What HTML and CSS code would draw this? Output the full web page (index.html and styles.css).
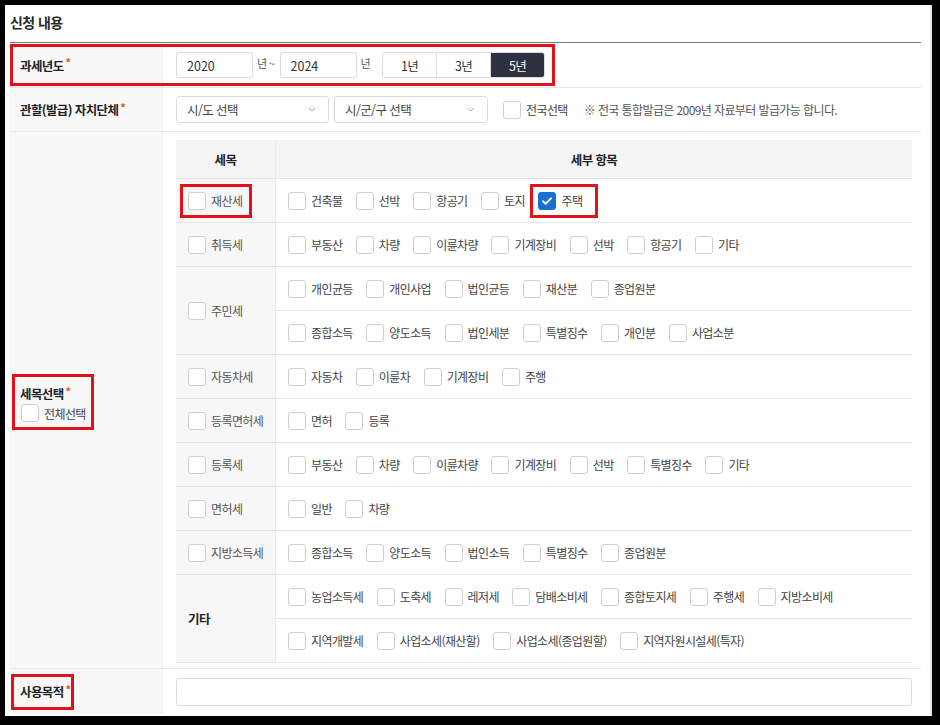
FILE: index.html
```html
<!DOCTYPE html>
<html lang="ko">
<head>
<meta charset="utf-8">
<title>신청 내용</title>
<link rel="stylesheet" href="styles.css">
</head>
<body>
<div class="page">
  <h2 class="title">신청 내용</h2>
  <div class="form">
    <div class="row r1">
      <div class="lab">과세년도<em>*</em></div>
      <div class="val">
        <span class="inp w77">2020</span>
        <span class="unit">년 ~</span>
        <span class="inp w77">2024</span>
        <span class="unit">년</span>
        <div class="seg">
          <span class="segb">1년</span>
          <span class="segb">3년</span>
          <span class="segb on">5년</span>
        </div>
      </div>
    </div>
    <div class="row r2">
      <div class="lab">관할(발급) 자치단체<em>*</em></div>
      <div class="val">
        <span class="sel s1">시/도 선택<svg class="chev" width="8" height="5" viewBox="0 0 8 5"><path d="M1 1l3 3 3-3" fill="none" stroke="#aaa" stroke-width="1"/></svg></span>
        <span class="sel s2">시/군/구 선택<svg class="chev" width="8" height="5" viewBox="0 0 8 5"><path d="M1 1l3 3 3-3" fill="none" stroke="#aaa" stroke-width="1"/></svg></span>
        <label class="ck all"><span class="cb"></span>전국선택</label>
        <span class="note">※ 전국 통합발급은 2009년 자료부터 발급가능 합니다.</span>
      </div>
    </div>
    <div class="row r3">
      <div class="lab lab3">
        <div>세목선택<em>*</em></div>
        <label class="ck"><span class="cb"></span>전체선택</label>
      </div>
      <div class="val val3">
        <div class="tbl">
          <div class="thead"><div class="th">세목</div><div class="th">세부 항목</div></div>

          <div class="trow">
            <div class="tl"><label class="ck"><span class="cb"></span>재산세</label></div>
            <div class="tr"><div class="sub">
              <label class="ck"><span class="cb"></span>건축물</label>
              <label class="ck"><span class="cb"></span>선박</label>
              <label class="ck"><span class="cb"></span>항공기</label>
              <label class="ck"><span class="cb"></span>토지</label>
              <label class="ck"><span class="cb on"><svg width="12" height="10" viewBox="0 0 12 10"><path d="M2 5.2l2.6 2.6L10 2.4" fill="none" stroke="#fff" stroke-width="2" stroke-linecap="round" stroke-linejoin="round"/></svg></span>주택</label>
            </div></div>
          </div>

          <div class="trow">
            <div class="tl"><label class="ck"><span class="cb"></span>취득세</label></div>
            <div class="tr"><div class="sub">
              <label class="ck"><span class="cb"></span>부동산</label>
              <label class="ck"><span class="cb"></span>차량</label>
              <label class="ck"><span class="cb"></span>이륜차량</label>
              <label class="ck"><span class="cb"></span>기계장비</label>
              <label class="ck"><span class="cb"></span>선박</label>
              <label class="ck"><span class="cb"></span>항공기</label>
              <label class="ck"><span class="cb"></span>기타</label>
            </div></div>
          </div>

          <div class="trow">
            <div class="tl"><label class="ck"><span class="cb"></span>주민세</label></div>
            <div class="tr">
              <div class="sub">
                <label class="ck"><span class="cb"></span>개인균등</label>
                <label class="ck"><span class="cb"></span>개인사업</label>
                <label class="ck"><span class="cb"></span>법인균등</label>
                <label class="ck"><span class="cb"></span>재산분</label>
                <label class="ck"><span class="cb"></span>종업원분</label>
              </div>
              <div class="sub">
                <label class="ck"><span class="cb"></span>종합소득</label>
                <label class="ck"><span class="cb"></span>양도소득</label>
                <label class="ck"><span class="cb"></span>법인세분</label>
                <label class="ck"><span class="cb"></span>특별징수</label>
                <label class="ck"><span class="cb"></span>개인분</label>
                <label class="ck"><span class="cb"></span>사업소분</label>
              </div>
            </div>
          </div>

          <div class="trow">
            <div class="tl"><label class="ck"><span class="cb"></span>자동차세</label></div>
            <div class="tr"><div class="sub">
              <label class="ck"><span class="cb"></span>자동차</label>
              <label class="ck"><span class="cb"></span>이륜차</label>
              <label class="ck"><span class="cb"></span>기계장비</label>
              <label class="ck"><span class="cb"></span>주행</label>
            </div></div>
          </div>

          <div class="trow">
            <div class="tl"><label class="ck"><span class="cb"></span>등록면허세</label></div>
            <div class="tr"><div class="sub">
              <label class="ck"><span class="cb"></span>면허</label>
              <label class="ck"><span class="cb"></span>등록</label>
            </div></div>
          </div>

          <div class="trow">
            <div class="tl"><label class="ck"><span class="cb"></span>등록세</label></div>
            <div class="tr"><div class="sub">
              <label class="ck"><span class="cb"></span>부동산</label>
              <label class="ck"><span class="cb"></span>차량</label>
              <label class="ck"><span class="cb"></span>이륜차량</label>
              <label class="ck"><span class="cb"></span>기계장비</label>
              <label class="ck"><span class="cb"></span>선박</label>
              <label class="ck"><span class="cb"></span>특별징수</label>
              <label class="ck"><span class="cb"></span>기타</label>
            </div></div>
          </div>

          <div class="trow">
            <div class="tl"><label class="ck"><span class="cb"></span>면허세</label></div>
            <div class="tr"><div class="sub">
              <label class="ck"><span class="cb"></span>일반</label>
              <label class="ck"><span class="cb"></span>차량</label>
            </div></div>
          </div>

          <div class="trow">
            <div class="tl"><label class="ck"><span class="cb"></span>지방소득세</label></div>
            <div class="tr"><div class="sub">
              <label class="ck"><span class="cb"></span>종합소득</label>
              <label class="ck"><span class="cb"></span>양도소득</label>
              <label class="ck"><span class="cb"></span>법인소득</label>
              <label class="ck"><span class="cb"></span>특별징수</label>
              <label class="ck"><span class="cb"></span>종업원분</label>
            </div></div>
          </div>

          <div class="trow">
            <div class="tl"><strong class="etc">기타</strong></div>
            <div class="tr">
              <div class="sub">
                <label class="ck"><span class="cb"></span>농업소득세</label>
                <label class="ck"><span class="cb"></span>도축세</label>
                <label class="ck"><span class="cb"></span>레저세</label>
                <label class="ck"><span class="cb"></span>담배소비세</label>
                <label class="ck"><span class="cb"></span>종합토지세</label>
                <label class="ck"><span class="cb"></span>주행세</label>
                <label class="ck"><span class="cb"></span>지방소비세</label>
              </div>
              <div class="sub">
                <label class="ck"><span class="cb"></span>지역개발세</label>
                <label class="ck"><span class="cb"></span>사업소세(재산할)</label>
                <label class="ck"><span class="cb"></span>사업소세(종업원할)</label>
                <label class="ck"><span class="cb"></span>지역자원시설세(특자)</label>
              </div>
            </div>
          </div>
        </div>
      </div>
    </div>
    <div class="row r4">
      <div class="lab">사용목적<em>*</em></div>
      <div class="val"><span class="inp full"></span></div>
    </div>
  </div>

  <div class="mark m1"></div>
  <div class="mark m2"></div>
  <div class="mark m3"></div>
  <div class="mark m4"></div>
  <div class="mark m5"></div>
</div>
</body>
</html>
```

FILE: styles.css
```css
html, body {
  margin: 0;
  padding: 0;
  background: #000;
}
body {
  font-family: "Noto Sans CJK KR", "Noto Sans", sans-serif;
  font-size: 12px;
  letter-spacing: -0.6px;
  color: #333;
}
.page {
  position: relative;
  margin: 5px 0 0 5px;
  width: 927px;
  height: 711px;
  background: #fff;
  border-right: 2px solid #e6e6e6;
  padding: 0 9px 0 5px;
  box-sizing: border-box;
}
.title {
  margin: 0;
  height: 38px;
  line-height: 35px;
  font-size: 14px;
  font-weight: 700;
  color: #2a2a2a;
  letter-spacing: -0.6px;
  border-bottom: 1px solid #777;
  box-sizing: border-box;
}
.row {
  display: grid;
  grid-template-columns: 153px 1fr;
  border-bottom: 1px solid #e8e8e8;
}
.r1 { height: 45px; box-sizing: border-box; }
.r2 { height: 44px; box-sizing: border-box; }
.r4 { height: 45px; border-bottom: 0; }
.lab {
  background: #f8f8f8;
  border-right: 1px solid #efefef;
  display: flex;
  align-items: center;
  padding-left: 10px;
  font-weight: 700;
  font-size: 12.5px;
  color: #222;
}
.lab em {
  font-style: normal;
  color: #e8501e;
  margin-left: 2px;
  font-size: 11px;
}
.lab > em { margin-top: -6px; }
.lab3 {
  flex-direction: column;
  align-items: flex-start;
  justify-content: center;
  padding-top: 6px;
}
.lab3 > div { display: flex; align-items: center; }
.lab3 > div em { margin-top: -6px; }
.lab3 .ck { margin-top: 1px; margin-left: 1px; font-weight: 400; color: #444; font-size: 12px; }
.val {
  display: flex;
  align-items: center;
  padding-left: 13px;
}
.inp {
  display: flex;
  align-items: center;
  height: 26px;
  border: 1px solid #dcdcdc;
  border-radius: 3px;
  box-sizing: border-box;
  padding-left: 10px;
  font-size: 12.5px;
  color: #333;
  letter-spacing: 0;
}
.w77 { width: 77px; }
.full { width: 736px; height: 28px; }
.unit {
  margin: 0 4px 0 4px;
  padding-bottom: 5px;
  color: #555;
  font-size: 11px;
}
.unit + .inp { margin-left: 1px; }
.seg {
  display: flex;
  margin-left: 8px;
  border: 1px solid #dcdcdc;
  border-radius: 3px;
  overflow: hidden;
  height: 26px;
  box-sizing: border-box;
  font-size: 12.5px;
}
.segb {
  width: 53px;
  display: flex;
  align-items: center;
  justify-content: center;
  border-right: 1px solid #e2e2e2;
  color: #333;
}
.segb:last-child { border-right: 0; }
.segb.on { background: #2e3140; color: #fff; }
.sel {
  display: flex;
  align-items: center;
  justify-content: space-between;
  height: 27px;
  border: 1px solid #dcdcdc;
  border-radius: 3px;
  box-sizing: border-box;
  padding: 0 12px 0 10px;
  color: #444;
  font-size: 12.5px;
}
.s1 { width: 153px; }
.s2 { width: 154px; margin-left: 5px; }
.all { margin-left: 15px; }
.note { margin-left: 16px; color: #555; }

.ck {
  display: inline-flex;
  align-items: center;
  white-space: nowrap;
  color: #444;
}
.cb {
  width: 18px;
  height: 18px;
  border: 1px solid #cfcfcf;
  border-radius: 3px;
  background: #fff;
  box-sizing: border-box;
  margin-right: 5px;
  display: inline-flex;
  align-items: center;
  justify-content: center;
  flex: none;
}
.cb.on { background: #1a6fd3; border-color: #1a6fd3; }

.val3 { align-items: flex-start; padding-top: 8px; }
.r3 { height: 537px; box-sizing: border-box; }
.tbl { width: 736px; }
.thead {
  display: grid;
  grid-template-columns: 100px 1fr;
  height: 39px;
  background: #f5f5f5;
  border-bottom: 1px solid #e4e4e4;
  box-sizing: border-box;
}
.th {
  display: flex;
  align-items: center;
  justify-content: center;
  font-weight: 700;
  font-size: 12.5px;
  color: #222;
}
.th:first-child { border-right: 1px solid #ebebeb; }
.trow {
  display: grid;
  grid-template-columns: 100px 1fr;
  border-bottom: 1px solid #e4e4e4;
}
.tl {
  background: #f7f7f7;
  border-right: 1px solid #ebebeb;
  display: flex;
  align-items: center;
  padding-left: 12px;
}
.tl .ck { color: #555; }
.etc { font-weight: 700; color: #222; font-size: 12.5px; }
.sub {
  height: 43px;
  display: flex;
  align-items: center;
  padding-left: 12px;
  gap: 13.5px;
}
.sub + .sub { border-top: 1px solid #e4e4e4; }

.mark {
  position: absolute;
  border: 3px solid #e3121a;
  box-sizing: border-box;
}
.m1 { left: 5px; top: 39px; width: 545px; height: 42px; }
.m2 { left: 7px; top: 369px; width: 82px; height: 56px; }
.m3 { left: 175px; top: 179px; width: 72px; height: 34px; }
.m4 { left: 525px; top: 179px; width: 68px; height: 34px; }
.m5 { left: 6px; top: 669px; width: 63px; height: 36px; }
```
